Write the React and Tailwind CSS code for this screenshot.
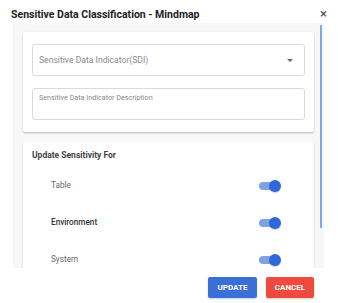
import React from "react";

const Toggle = () => (
  <div className="relative w-[22px] h-[12px] flex items-center">
    <div className="w-[20px] h-[8px] rounded-full bg-[#7fa2e6]" />
    <div className="absolute right-0 w-[12px] h-[12px] rounded-full bg-[#2f68d8] shadow-[0_1px_1px_rgba(0,0,0,0.2)]" />
  </div>
);

const Row = ({ label, dark }) => (
  <div className="flex items-center justify-between h-[37px] pl-[19px] pr-[24px]">
    <span className={dark ? "text-[8.2px] text-[#333] font-medium" : "text-[8.2px] text-[#666]"}>
      {label}
    </span>
    <Toggle />
  </div>
);

export default function App() {
  return (
    <div
      className="w-[338px] h-[303px] bg-white flex flex-col"
      style={{ fontFamily: "Roboto, 'Liberation Sans', sans-serif" }}
    >
      {/* Header */}
      <div className="h-[23px] flex items-end justify-between pl-[11px] pr-[11px] pb-[3px]">
        <span className="text-[10.5px] font-bold text-[#222] leading-none">
          Sensitive Data Classification - Mindmap
        </span>
        <span className="text-[13px] text-[#444] leading-none">×</span>
      </div>

      {/* Scroll body */}
      <div className="relative ml-[13px] w-[311px] h-[245px] bg-[#f7f7f7] overflow-hidden pt-[9px] pl-[10px] pr-[10px]">
        <div className="absolute right-[2px] top-[2px] w-[2px] h-[203px] bg-[#80a6ee]" />

        {/* Card 1 */}
        <div className="bg-white rounded-[2px] shadow-[0_1px_2px_rgba(0,0,0,0.25)] px-[9px] py-[12px] flex flex-col gap-[12px]">
          <div className="h-[32px] border border-[#dadada] rounded-[3px] flex items-center justify-between pl-[6px] pr-[11px]">
            <span className="text-[8.6px] text-[#8a8a8a]">Sensitive Data Indicator(SDI)</span>
            <span className="w-0 h-0 border-l-[3px] border-r-[3px] border-t-[3px] border-l-transparent border-r-transparent border-t-[#666]" />
          </div>
          <div className="h-[32px] border border-[#dadada] rounded-[3px] pl-[6px] pt-[5px]">
            <span className="block text-[7.2px] text-[#888] leading-none">
              Sensitive Data Indicator Description
            </span>
          </div>
        </div>

        {/* Card 2 */}
        <div className="mt-[10px] bg-white rounded-[2px] shadow-[0_1px_2px_rgba(0,0,0,0.2)] px-[9px] pt-[8px] h-[200px]">
          <div className="text-[8.5px] font-bold text-[#444] leading-[10px]">Update Sensitivity For</div>
          <div className="mt-[7px]">
            <Row label="Table" />
            <Row label="Environment" dark />
            <Row label="System" />
          </div>
        </div>
      </div>

      {/* Footer */}
      <div className="flex justify-end gap-[9px] pr-[24px] pt-[9px]">
        <button className="w-[49px] h-[21px] rounded-[2px] bg-[#3a6fd8] text-white text-[8px] font-bold shadow-[0_1px_2px_rgba(0,0,0,0.2)]">
          UPDATE
        </button>
        <button className="w-[48px] h-[21px] rounded-[2px] bg-[#ef4a40] text-white text-[8px] font-bold shadow-[0_1px_2px_rgba(0,0,0,0.2)]">
          CANCEL
        </button>
      </div>
    </div>
  );
}
